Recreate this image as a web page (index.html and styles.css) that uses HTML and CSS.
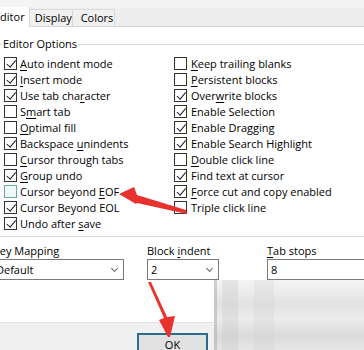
FILE: index.html
```html
<!DOCTYPE html>
<html>
<head>
<meta charset="utf-8">
<link rel="stylesheet" href="styles.css">
</head>
<body>
<div class="dialog">
  <div class="tabs">
    <div class="tab active">Editor</div>
    <div class="tab">Display</div>
    <div class="tab">Colors</div>
  </div>
  <div class="group">
    <div class="legend">Editor Options</div>
    <div class="cols">
      <div class="col">
        <div class="row"><span class="box on"></span><span><u>A</u>uto indent mode</span></div>
        <div class="row"><span class="box on"></span><span><u>I</u>nsert mode</span></div>
        <div class="row"><span class="box on"></span><span>Use tab cha<u>r</u>acter</span></div>
        <div class="row"><span class="box"></span><span>S<u>m</u>art tab</span></div>
        <div class="row"><span class="box"></span><span><u>O</u>ptimal fill</span></div>
        <div class="row"><span class="box on"></span><span>Backspace <u>u</u>nindents</span></div>
        <div class="row"><span class="box"></span><span><u>C</u>ursor through tabs</span></div>
        <div class="row"><span class="box on"></span><span><u>G</u>roup undo</span></div>
        <div class="row"><span class="box hover"></span><span>Cursor beyond <u>E</u>OF</span></div>
        <div class="row"><span class="box on"></span><span>Cursor Beyond EOL</span></div>
        <div class="row"><span class="box on"></span><span>Undo after <u>s</u>ave</span></div>
      </div>
      <div class="col right">
        <div class="row"><span class="box"></span><span><u>K</u>eep trailing blanks</span></div>
        <div class="row"><span class="box"></span><span><u>P</u>ersistent blocks</span></div>
        <div class="row"><span class="box on"></span><span>Over<u>w</u>rite blocks</span></div>
        <div class="row"><span class="box on"></span><span>Enable Selection</span></div>
        <div class="row"><span class="box on"></span><span>Enable Dragging</span></div>
        <div class="row"><span class="box on"></span><span>Enable Search Highlight</span></div>
        <div class="row"><span class="box"></span><span><u>D</u>ouble click line</span></div>
        <div class="row"><span class="box on"></span><span>Find text at cursor</span></div>
        <div class="row"><span class="box on"></span><span><u>F</u>orce cut and copy enabled</span></div>
        <div class="row"><span class="box"></span><span>Triple click line</span></div>
      </div>
    </div>
  </div>
  <div class="fields">
    <div class="field f1">
      <div class="label">Key Mapping</div>
      <div class="combo"><span>Default</span><span class="chev"></span></div>
    </div>
    <div class="field f2">
      <div class="label">Block <u>i</u>ndent</div>
      <div class="combo"><span>2</span><span class="chev"></span></div>
    </div>
    <div class="field f3">
      <div class="label"><u>T</u>ab stops</div>
      <div class="combo"><span>8</span><span class="chev"></span></div>
    </div>
  </div>
  <div class="spacer"></div>
  <div class="footer">
    <div class="ok">OK</div>
  </div>
  <div class="blur"></div>
  <svg class="arrows" width="364" height="350" viewBox="0 0 364 350">
    <polygon points="119,194 134,187 137,195 186,210 187,214 137,203 136,204" fill="#e8322e"/>
    <polygon points="148,282 151,282 167,317 175,316 170,337 168,337 159,320 164,318" fill="#e8322e"/>
  </svg>
</div>
</body>
</html>
```

FILE: styles.css
```css
* { box-sizing: border-box; }
html, body { margin: 0; padding: 0; }
body {
  font-family: "Open Sans", "Noto Sans", sans-serif;
  font-size: 11px;
  color: #000;
  background: #fff;
}
.dialog {
  position: relative;
  width: 364px;
  height: 350px;
  overflow: hidden;
  background: #fff;
  display: flex;
  flex-direction: column;
}
.tabs {
  height: 27px;
  flex: none;
  display: flex;
  align-items: flex-end;
  background: linear-gradient(#f4f4f4 0 8px, #ededed 8px);
  border-bottom: 1px solid #d6d6d6;
}
.tab {
  height: 17px;
  line-height: 15px;
  padding: 0 6px;
  border: 1px solid #d9d9d9;
  border-bottom: none;
  background: #f0f0f0;
  margin-right: -1px;
}
.tab.active {
  height: 20px;
  line-height: 20px;
  background: #fff;
  margin-left: -12px;
  padding: 0 4px 0 6px;
  margin-bottom: -1px;
  border-top: none;
  border-left: none;
}
.tab:nth-child(2) { width: 44px; padding-left: 5px; }
.tab:nth-child(3) { width: 43px; padding-left: 8px; }
.group {
  margin-top: 17px;
  border-top: 1px solid #dcdcdc;
  border-bottom: 1px solid #dcdcdc;
  padding-bottom: 5px;
}
.legend {
  margin-top: -9px;
  margin-left: 2px;
  height: 16px;
  line-height: 16px;
  width: max-content;
  padding: 0 1px;
  background: #fff;
}
.cols { display: flex; margin-top: 3px; }
.col { width: 170px; padding-left: 4px; }
.col.right { width: 194px; padding-left: 4px; }
.row {
  height: 16px;
  display: flex;
  align-items: center;
  white-space: nowrap;
}
.box {
  position: relative;
  width: 13px;
  height: 13px;
  border: 1px solid #333;
  background: #fff;
  margin-right: 3px;
  flex: none;
}
.col.right .box { margin-right: 4px; }
.box.on::after {
  content: "";
  position: absolute;
  left: 3.5px;
  top: 0.5px;
  width: 3.5px;
  height: 7.5px;
  border-right: 1px solid #222;
  border-bottom: 1px solid #222;
  transform: rotate(40deg);
}
.box.hover { border-color: #6fa8a8; background: #eef8f8; }
u { text-decoration-thickness: 1px; text-underline-offset: 2px; }
.fields {
  display: flex;
  margin-top: 5px;
  margin-left: -8px;
}
.field { flex: none; }
.f1 { width: 132px; }
.f2 { width: 72px; margin-left: 23px; }
.f3 { width: 120px; margin-left: 48px; }
.label { height: 17px; line-height: 17px; white-space: nowrap; }
.f1 .label { padding-left: 1px; }
.combo {
  height: 21px;
  border: 1px solid #7a7a7a;
  background: #fff;
  display: flex;
  align-items: center;
  justify-content: space-between;
  padding: 0 6px 0 3px;
}
.chev {
  width: 5px;
  height: 5px;
  border-right: 1px solid #666;
  border-bottom: 1px solid #666;
  transform: rotate(45deg);
  margin-top: -3px;
}
.spacer { flex: 1; }
.footer {
  height: 28px;
  flex: none;
  background: #f0f0f0;
  border-top: 1px solid #e3e3e3;
  padding: 10px 0 0 137px;
}
.ok {
  width: 71px;
  height: 23px;
  border: 2px solid #2b6e8c;
  background: #e1e1e1;
  text-align: center;
  line-height: 19px;
}
.blur {
  position: absolute;
  left: 214px;
  top: 280px;
  width: 150px;
  height: 70px;
  background:
    linear-gradient(90deg, rgba(170,170,170,0.5) 0 3px, transparent 3px 8px, rgba(200,200,200,0.35) 8px 24px, transparent 24px 40px, rgba(210,210,210,0.3) 40px 60px, transparent 60px),
    linear-gradient(180deg, #f4f4f4 0%, #e2e2e2 35%, #ececec 55%, #dadada 80%, #e6e6e6 100%);
}
.arrows { position: absolute; left: 0; top: 0; }
```
